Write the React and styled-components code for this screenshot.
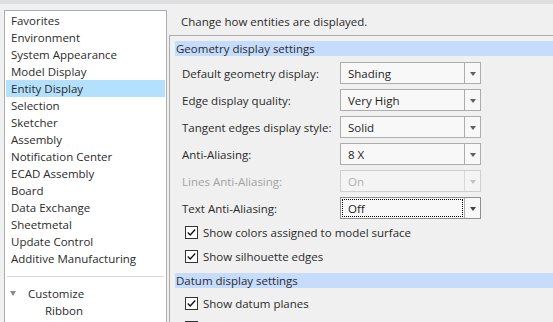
import React from 'react';
import styled, { createGlobalStyle } from 'styled-components';

const Global = createGlobalStyle`
  html, body { margin: 0; padding: 0; }
  body {
    width: 553px;
    height: 322px;
    overflow: hidden;
    background: #f0f0f0;
    font-family: "Open Sans", "Noto Sans", sans-serif;
    font-size: 11.5px;
    color: #2b2b2b;
  }
`;

const Page = styled.div`
  display: flex;
  flex-direction: column;
  height: 322px;
  overflow: hidden;
`;

const TopBand = styled.div`
  height: 4px;
  flex: none;
  background: #dcdee0;
`;

const Main = styled.div`
  display: flex;
  flex: 1;
  min-height: 0;
  padding-left: 4px;
`;

const Sidebar = styled.div`
  width: 163px;
  box-sizing: border-box;
  flex: none;
  margin-top: 6px;
  border: 1px solid #abadb3;
  border-bottom: none;
  background: #fff;
  padding: 1px 1px 0;
`;

const ListItem = styled.div`
  height: 17px;
  line-height: 17px;
  padding-left: ${p => p.$indent || 5}px;
  background: ${p => (p.$selected ? '#b3e0fd' : 'transparent')};
  white-space: nowrap;
  display: flex;
  align-items: center;
`;

const Separator = styled.div`
  height: 1px;
  background: #d7d7d7;
  margin: 9px 1px 8px 1px;
`;

const Twisty = styled.span`
  width: 0;
  height: 0;
  border-left: 3.5px solid transparent;
  border-right: 3.5px solid transparent;
  border-top: 5px solid #8a8a8a;
  margin-right: 12px;
`;

const Content = styled.div`
  flex: 1;
  min-width: 0;
  display: flex;
  flex-direction: column;
`;

const Description = styled.div`
  margin-top: 9px;
  padding-left: 14px;
  line-height: 17px;
  white-space: nowrap;
`;

const GroupBox = styled.div`
  margin: 5px -40px 0 2px;
  border: 1px solid #acacac;
  border-bottom: none;
  padding: 5px 0 0 5px;
  flex: 1;
  display: flex;
  flex-direction: column;
`;

const SectionHeader = styled.div`
  height: 15px;
  line-height: 15px;
  background: #c5dcfd;
  padding-left: 1px;
  margin-top: ${p => p.$mt || 0}px;
  white-space: nowrap;
`;

const Fields = styled.div`
  display: flex;
  flex-direction: column;
  gap: 5px;
  margin-top: 6px;
  padding-left: 7px;
`;

const FieldRow = styled.div`
  display: flex;
  align-items: center;
  height: 22px;
`;

const FieldLabel = styled.div`
  width: 158px;
  flex: none;
  white-space: nowrap;
  color: ${p => (p.$disabled ? '#a3a3a3' : 'inherit')};
`;

const Combo = styled.div`
  width: 141px;
  height: 22px;
  box-sizing: border-box;
  display: flex;
  border: 1px solid ${p => (p.$disabled ? '#cfcfcf' : p.$focused ? '#8f8f8f' : '#adadad')};
  background: ${p => (p.$disabled ? '#f4f4f4' : '#f8f8f8')};
  color: ${p => (p.$disabled ? '#b0b0b0' : '#1e1e1e')};
`;

const ComboValue = styled.div`
  flex: 1;
  display: flex;
  align-items: center;
  padding-left: 7px;
  margin: ${p => (p.$focused ? '1px' : '0')};
  padding-left: ${p => (p.$focused ? '6px' : '7px')};
  outline: ${p => (p.$focused ? '1px dotted #000' : 'none')};
  outline-offset: -1px;
  white-space: nowrap;
`;

const ComboButton = styled.div`
  width: 15px;
  flex: none;
  border-left: 1px solid ${p => (p.$disabled ? '#d8d8d8' : '#adadad')};
  display: flex;
  align-items: center;
  justify-content: center;
`;

const Arrow = styled.span`
  width: 0;
  height: 0;
  margin-top: 1px;
  border-left: 3.5px solid transparent;
  border-right: 3.5px solid transparent;
  border-top: 4px solid ${p => (p.$disabled ? '#c4c4c4' : p.$focused ? '#444' : '#5f5f5f')};
`;

const Checks = styled.div`
  display: flex;
  flex-direction: column;
  margin-top: ${p => p.$mt || 0}px;
  padding-left: 10px;
`;

const CheckRow = styled.label`
  display: flex;
  align-items: center;
  height: 24px;
  white-space: nowrap;
`;

const CheckBox = styled.span`
  width: 13px;
  height: 13px;
  box-sizing: border-box;
  border: 1px solid #333;
  background: #fff;
  flex: none;
  margin-right: 5px;
  display: flex;
  align-items: center;
  justify-content: center;
`;

const sidebarItems = [
  'Favorites', 'Environment', 'System Appearance', 'Model Display', 'Entity Display',
  'Selection', 'Sketcher', 'Assembly', 'Notification Center', 'ECAD Assembly', 'Board',
  'Data Exchange', 'Sheetmetal', 'Update Control', 'Additive Manufacturing',
];

const fields = [
  { label: 'Default geometry display:', value: 'Shading' },
  { label: 'Edge display quality:', value: 'Very High' },
  { label: 'Tangent edges display style:', value: 'Solid' },
  { label: 'Anti-Aliasing:', value: '8 X' },
  { label: 'Lines Anti-Aliasing:', value: 'On', disabled: true },
  { label: 'Text Anti-Aliasing:', value: 'Off', focused: true },
];

const Check = ({ children }) => (
  <CheckRow>
    <CheckBox>
      <svg width="11" height="11" viewBox="0 0 11 11">
        <path d="M1.8 5.6 L4.2 8 L9.2 2.6" fill="none" stroke="#111" strokeWidth="1.4" />
      </svg>
    </CheckBox>
    {children}
  </CheckRow>
);

export default function App() {
  return (
    <Page>
      <Global />
      <TopBand />
      <Main>
        <Sidebar>
          {sidebarItems.map(item => (
            <ListItem key={item} $selected={item === 'Entity Display'}>{item}</ListItem>
          ))}
          <Separator />
          <ListItem $indent={4}><Twisty />Customize</ListItem>
          <ListItem $indent={39}>Ribbon</ListItem>
        </Sidebar>
        <Content>
          <Description>Change how entities are displayed.</Description>
          <GroupBox>
            <SectionHeader>Geometry display settings</SectionHeader>
            <Fields>
              {fields.map(f => (
                <FieldRow key={f.label}>
                  <FieldLabel $disabled={f.disabled}>{f.label}</FieldLabel>
                  <Combo $disabled={f.disabled} $focused={f.focused}>
                    <ComboValue $focused={f.focused}>{f.value}</ComboValue>
                    <ComboButton $disabled={f.disabled}>
                      <Arrow $disabled={f.disabled} $focused={f.focused} />
                    </ComboButton>
                  </Combo>
                </FieldRow>
              ))}
            </Fields>
            <Checks $mt={1}>
              <Check>Show colors assigned to model surface</Check>
              <Check>Show silhouette edges</Check>
            </Checks>
            <SectionHeader $mt={5}>Datum display settings</SectionHeader>
            <Checks $mt={3}>
              <Check>Show datum planes</Check>
              <Check>Show datum axes</Check>
            </Checks>
          </GroupBox>
        </Content>
      </Main>
    </Page>
  );
}
